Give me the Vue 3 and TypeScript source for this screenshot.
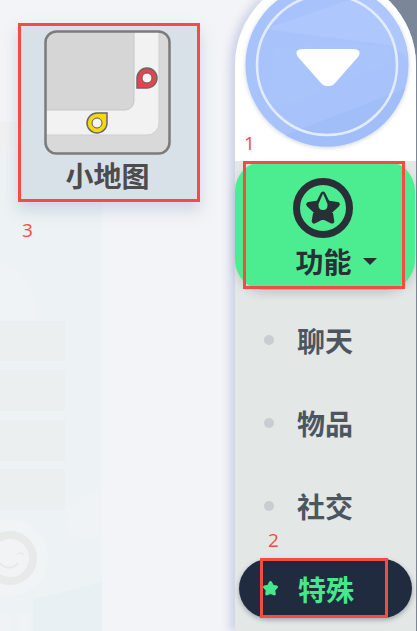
<script setup lang="ts">
const menuItems = [
  { label: '聊天', active: false },
  { label: '物品', active: false },
  { label: '社交', active: false },
  { label: '特殊', active: true },
]
</script>

<template>
  <div class="page">
    <main class="stage">
      <!-- faded game scene behind the card -->
      <svg class="ghost" width="102" height="509" viewBox="0 0 102 509">
        <rect width="102" height="509" fill="#edf2f4" />
        <rect y="0" width="17" height="24" fill="#eef1ef" />
        <circle cx="-14" cy="188" r="50" fill="#f0f3f5" />
        <path d="M102 366 Q68 376 66 400 Q68 416 80 416 H102 Z" fill="#eff3f5" />
        <rect y="199" width="65" height="40" fill="#ecefef" />
        <rect y="248" width="65" height="41" fill="#ecefef" />
        <rect y="298" width="65" height="41" fill="#ecefef" />
        <rect y="347" width="65" height="41" fill="#ecefef" />
        <circle cx="10" cy="436" r="38" fill="#f1f4f5" />
        <circle cx="10" cy="436" r="23" fill="#f1f3f4" stroke="#e8e9e9" stroke-width="8" />
        <path d="M0 441 a10 8 0 0 0 18 0" fill="none" stroke="#e8e9e9" stroke-width="2" />
        <path d="M17 433 q3 -4 7 0" fill="none" stroke="#e8e9e9" stroke-width="1.500" />
        <path d="M33 509 L33 478 L102 460 L102 509 Z" fill="#e8f0f3" />
        <rect y="491" width="11" height="18" fill="#f0f3f5" />
        <rect x="18" y="491" width="12" height="18" fill="#f0f3f5" />
      </svg>

      <section class="map-card">
        <svg class="map-icon" width="127" height="125" viewBox="0 0 127 125">
          <defs>
            <clipPath id="mapClip"><rect x="1.5" y="1.5" width="124" height="122" rx="11" /></clipPath>
          </defs>
          <g clip-path="url(#mapClip)">
            <rect width="127" height="125" fill="#d9d9d9" />
            <path d="M0 0 H115 V93 a12 12 0 0 1 -12 12 H0 Z" fill="#f3f2f2" stroke="#cfcfcf" stroke-width="1" />
            <path d="M0 0 H90 V71 a9 9 0 0 1 -9 9 H0 Z" fill="#d6d6d6" stroke="#c6c6c6" stroke-width="1" />
          </g>
          <rect x="1.5" y="1.5" width="124" height="122" rx="11" fill="none" stroke="#7b7b7b" stroke-width="2.5" />
          <path d="M103 38 a10 10 0 1 1 0 20 L93 58 L93 48 a10 10 0 0 1 10 -10 Z" fill="#e8434c" stroke="#68686a" stroke-width="1.500" />
          <circle cx="103" cy="48" r="5" fill="#f6f6f6" stroke="#5c5c5c" stroke-width="1" />
          <path d="M53 83 L63 83 L63 93 a10 10 0 1 1 -10 -10 Z" fill="#f5d90f" stroke="#68686a" stroke-width="1.500" />
          <circle cx="53" cy="93" r="5" fill="#f6f6f6" stroke="#5c5c5c" stroke-width="1" />
        </svg>
        <span class="map-label">小地图</span>
        <span class="mark mark-three">3</span>
      </section>
    </main>

    <aside class="side-shell">
      <div class="sidebar">
        <header class="knob-wrap">
          <svg class="knob" width="164" height="164" viewBox="0 0 164 164">
            <defs>
              <clipPath id="discClip"><circle cx="82" cy="82" r="81.5" /></clipPath>
            </defs>
            <g clip-path="url(#discClip)">
              <rect width="164" height="164" fill="#a8c3fb" />
              <path d="M20 46 L130 8 L170 30 L170 80 L145 62 Z" fill="#aec8fd" />
              <path d="M30 64 L140 62 L150 78 L20 130 Z" fill="#a9c4fb" />
              <path d="M30 156 L164 104 L164 170 L30 170 Z" fill="#a1bef9" />
            </g>
            <circle cx="82" cy="82" r="70" fill="none" stroke="#e3ecff" stroke-width="2.5" />
            <path d="M59 66 H107 Q118 66 113 74 L91 99 Q88 103 84 103 H82 Q78 103 75 99 L53 74 Q48 66 59 66 Z" fill="#ffffff" />
          </svg>
        </header>

        <div class="feature-tile">
          <svg class="star-badge" width="60" height="60" viewBox="0 0 60 60">
            <circle cx="30" cy="30" r="26.5" fill="none" stroke="#2a2f37" stroke-width="7" />
            <path
              d="M30 16 L34.4 24.900 L44.300 26.400 L37.100 33.300 L38.800 43.100 L30 38.500 L21.200 43.100 L22.900 33.300 L15.700 26.400 L25.600 24.900 Z"
              fill="#2a2f37"
              stroke="#2a2f37"
              stroke-width="5"
              stroke-linejoin="round"
            />
            <path d="M30 15.500 L34.500 26 Q35 32 30 32 Q25 32 25.500 26 Z" fill="#4bed90" />
          </svg>
          <div class="tile-label">
            <span>功能</span>
            <i class="caret"></i>
          </div>
          <span class="frame"></span>
          <span class="mark mark-one">1</span>
        </div>

        <nav class="menu">
          <div v-for="item in menuItems" :key="item.label" class="menu-item" :class="{ active: item.active }">
            <svg v-if="item.active" class="menu-star" width="17" height="17" viewBox="0 0 17 17">
              <path
                d="M8.500 2.500 L10.500 6.300 L14.500 7 L11.700 10 L12.300 14 L8.500 12.300 L4.700 14 L5.300 10 L2.500 7 L6.500 6.300 Z"
                fill="#45e88c"
                stroke="#45e88c"
                stroke-width="3"
                stroke-linejoin="round"
              />
            </svg>
            <i v-else class="dot"></i>
            <span>{{ item.label }}</span>
            <template v-if="item.active">
              <span class="frame frame-pill"></span>
              <span class="mark mark-two">2</span>
            </template>
          </div>
        </nav>
      </div>
    </aside>
  </div>
</template>

<style scoped>
.page {
  display: flex;
  justify-content: space-between;
  width: 417px;
  height: 631px;
  overflow: hidden;
  background: #f2f4f7;
  font-family: "Noto Sans CJK SC", "Noto Sans", sans-serif;
}

.stage {
  position: relative;
  flex: 1;
  padding: 23px 0 0 18px;
}

.ghost {
  position: absolute;
  top: 122px;
  left: 0;
}

.map-card {
  position: relative;
  display: flex;
  flex-direction: column;
  align-items: center;
  box-sizing: border-box;
  width: 182px;
  height: 179px;
  padding: 4px 3px 0 0;
  border: 3px solid #f34c41;
  background: #d9e1e8;
  box-shadow: 0 8px 14px rgba(140, 160, 190, 0.35);
}

.map-label {
  margin-top: 1px;
  color: #4c4c4c;
  font-size: 28px;
  font-weight: 700;
  line-height: 38px;
}

.mark {
  position: absolute;
  color: #f34c41;
  font-family: "Open Sans", sans-serif;
  font-size: 19px;
  font-weight: 400;
  line-height: 20px;
}

.mark-three {
  top: 194px;
  left: 1px;
}

.mark-one {
  top: -28px;
  left: 9px;
}

.mark-two {
  top: -29px;
  left: 29px;
}

.side-shell {
  width: 182px;
  background: linear-gradient(90deg, transparent 50%, #7b8798 50%);
}

.sidebar {
  display: flex;
  flex-direction: column;
  width: 181px;
  height: 656px;
  margin-top: -25px;
  border-radius: 90px 90px 0 0;
  background: #e3e7e6;
  box-shadow: -5px 0 9px rgba(125, 140, 200, 0.32);
}

.knob-wrap {
  display: flex;
  justify-content: center;
  height: 186px;
  padding: 8px 0 0 2px;
  box-sizing: border-box;
  border-radius: 90px 90px 0 0;
  background: #fff;
}

.knob {
  filter: drop-shadow(0 1px 2px rgba(110, 125, 160, 0.35));
}

.feature-tile {
  position: relative;
  display: flex;
  flex-direction: column;
  align-items: center;
  box-sizing: border-box;
  width: 180px;
  height: 129px;
  padding-top: 17px;
  border-radius: 30px;
  background: #4bed90;
  box-shadow: 0 4px 9px rgba(60, 70, 80, 0.18);
  color: #2a2f37;
}

.star-badge {
  margin-left: -4px;
}

.tile-label {
  display: flex;
  align-items: center;
  gap: 11px;
  margin-left: 22px;
  font-size: 28px;
  font-weight: 700;
  line-height: 46px;
}

.caret {
  width: 0;
  height: 0;
  margin-top: 1px;
  border-top: 7px solid #2a2f37;
  border-right: 7px solid transparent;
  border-left: 7px solid transparent;
}

.frame {
  position: absolute;
  top: 0;
  bottom: 1px;
  left: 8px;
  width: 162px;
  box-sizing: border-box;
  border: 3px solid #f34c41;
}

.menu {
  display: flex;
  flex-direction: column;
  gap: 24px;
  padding: 20px 4px 0;
}

.menu-item {
  position: relative;
  display: flex;
  align-items: center;
  gap: 23px;
  height: 59px;
  padding-left: 25px;
  box-sizing: border-box;
  border-radius: 30px;
  color: #4b5660;
  font-size: 28px;
  font-weight: 700;
}

.dot {
  width: 10px;
  height: 10px;
  border-radius: 50%;
  background: #c7cdd0;
}

.menu-item.active {
  gap: 19px;
  padding-left: 23px;
  background: #202b40;
  box-shadow: 0 2px 5px rgba(30, 40, 60, 0.35);
  color: #45e88c;
}

.frame-pill {
  top: -1px;
  bottom: 0;
  left: 21px;
  width: 128px;
}
</style>
